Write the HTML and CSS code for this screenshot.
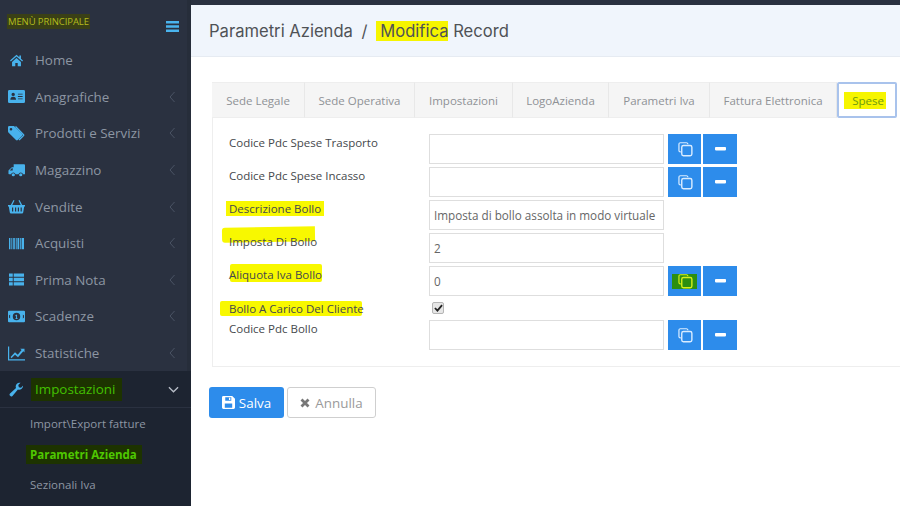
FILE: index.html
```html
<!DOCTYPE html>
<html lang="it">
<head>
<meta charset="utf-8">
<title>Parametri Azienda</title>
<link rel="stylesheet" href="styles.css">
</head>
<body>
<svg class="defs" width="0" height="0">
  <symbol id="chev" viewBox="0 0 6 12"><path d="M5.5 1 1 6l4.500 5" fill="none" stroke="currentColor" stroke-width="1"/></symbol>
  <symbol id="copy" viewBox="0 0 16 16"><path d="M10.500 2.500V2A1.500 1.500 0 0 0 9 .8H2.500A1.500 1.500 0 0 0 1 2.300V9a1.500 1.500 0 0 0 1.500 1.500H3" fill="none" stroke="currentColor" stroke-width="1.300"/><rect x="4" y="3.700" width="10.800" height="11" rx="1.800" fill="none" stroke="currentColor" stroke-width="1.500"/></symbol>
  <symbol id="minus" viewBox="0 0 11 4"><rect width="11" height="3.400" rx=".8" fill="currentColor"/></symbol>
</svg>
<aside class="sidebar">
  <div class="side-head">
    <span class="side-title">MENÙ PRINCIPALE</span>
    <svg class="burger" viewBox="0 0 13 11"><path d="M0 0h13v2.400H0zM0 4.300h13v2.400H0zM0 8.600h13V11H0z" fill="currentColor"/></svg>
  </div>
  <nav class="nav">
    <a class="item"><svg class="ico" viewBox="-2.460 -2.200 20.900 18.500"><path d="M8 0 0 7l1 1.200L8 2.200l7 6L16 7l-2.500-2.200V1h-2v2.100zM2.500 8.800V14h4v-4h3v4h4V8.800L8 4z" fill="currentColor"/></svg><span class="lbl">Home</span></a>
    <a class="item"><svg class="ico" viewBox="0 0 18 14"><path fill-rule="evenodd" d="M1.500 0h15A1.500 1.500 0 0 1 18 1.500v11a1.500 1.500 0 0 1-1.500 1.500h-15A1.500 1.500 0 0 1 0 12.500v-11A1.500 1.500 0 0 1 1.500 0zM5.500 3a1.800 1.800 0 1 0 0 3.600 1.800 1.800 0 0 0 0-3.600zM2.500 10.500h6c0-2.200-1-3.300-3-3.300s-3 1.100-3 3.300zM10.500 4v1h5V4zm0 2.500v1h5v-1zm0 2.500v1h5V9z" fill="currentColor"/></svg><span class="lbl">Anagrafiche</span><svg class="chev"><use href="#chev"/></svg></a>
    <a class="item"><svg class="ico" viewBox="0 0 17 15"><path fill-rule="evenodd" d="M0 1.200A1.200 1.200 0 0 1 1.200 0H6l8 8a1.300 1.300 0 0 1 0 1.800L9.800 14a1.300 1.300 0 0 1-1.800 0L.4 6.500 0 5.500zM3 2a1.300 1.300 0 1 0 0 2.600A1.300 1.300 0 0 0 3 2z" fill="currentColor"/><path d="m8 0 8 8.200c.6.600.6 1.200 0 1.800l-4.500 4.600-1-1L15 9.200 7 1z" fill="currentColor"/></svg><span class="lbl">Prodotti e Servizi</span><svg class="chev"><use href="#chev"/></svg></a>
    <a class="item"><svg class="ico" viewBox="0 0 18 13"><path fill-rule="evenodd" d="M6 0h11a1 1 0 0 1 1 1v9.500h-2.100a2.500 2.500 0 0 0-4.800 0H8a2.500 2.500 0 0 0-4.800 0H1a1 1 0 0 1-.5-.5V6.500L4 3h2zM1.800 6.600H5V4.200H4z" fill="currentColor"/><circle cx="5.600" cy="11" r="1.700" fill="currentColor"/><circle cx="13.500" cy="11" r="1.700" fill="currentColor"/></svg><span class="lbl">Magazzino</span><svg class="chev"><use href="#chev"/></svg></a>
    <a class="item"><svg class="ico" viewBox="0 0 17 14"><path fill-rule="evenodd" d="M0 5.500h2.800L5.500.5l1 .6L4.300 5.500h8.400L10.500 1.100l1-.6 2.700 5H17V7h-.8l-1 6a1.200 1.200 0 0 1-1.200 1H3a1.200 1.200 0 0 1-1.200-1l-1-6H0zM4 8v4h1.200V8zm3 0v4h1.200V8zm2.800 0v4H11V8zm2.800 0v4h1.200V8z" fill="currentColor"/></svg><span class="lbl">Vendite</span><svg class="chev"><use href="#chev"/></svg></a>
    <a class="item"><svg class="ico" viewBox="-1.050 -2 18.100 16"><path d="M0 0h1.500v12H0zM2.500 0h1v12h-1zM4.500 0h1.700v12H4.500zM7.200 0h1v12h-1zM9 0h1.800v12H9zM11.600 0h1v12h-1zM13.400 0H16v12h-2.600z" fill="currentColor"/></svg><span class="lbl">Acquisti</span><svg class="chev"><use href="#chev"/></svg></a>
    <a class="item"><svg class="ico" viewBox="-1.050 -1.500 18.100 16"><path d="M0 0h4v3.600H0zM5 0h11v3.600H5zM0 4.700h4v3.600H0zM5 4.700h11v3.600H5zM0 9.400h4V13H0zM5 9.400h11V13H5z" fill="currentColor"/></svg><span class="lbl">Prima Nota</span><svg class="chev"><use href="#chev"/></svg></a>
    <a class="item"><svg class="ico" viewBox="0 0 16 11"><path fill-rule="evenodd" d="M1 0h14a1 1 0 0 1 1 1v9a1 1 0 0 1-1 1H1a1 1 0 0 1-1-1V1a1 1 0 0 1 1-1zm7 2a3.500 3.500 0 1 0 0 7 3.500 3.500 0 0 0 0-7zM2 3.500a1.500 1.500 0 0 1-1 .8v2.400a1.500 1.500 0 0 1 1 .8zm12 0v4a1.500 1.500 0 0 1 1-.8V4.300a1.500 1.500 0 0 1-1-.8zM7.500 3.800h1v3.400h.6v.7H7v-.7h.6v-2.200l-.5.3-.3-.5z" fill="currentColor"/></svg><span class="lbl">Scadenze</span><svg class="chev"><use href="#chev"/></svg></a>
    <a class="item"><svg class="ico" viewBox="0 0 17 14"><path d="M0 0h1.200v12.800H17V14H0z" fill="currentColor"/><path d="M2.600 10.500 7 5.800l2.800 2.400 3.800-4.700-1.400-1.300H16.500V6l-1.200-1.200-5.300 6-3-2.500-3.600 3.500z" fill="currentColor"/></svg><span class="lbl">Statistiche</span><svg class="chev"><use href="#chev"/></svg></a>
    <a class="item active"><svg class="ico" viewBox="-.5 -.5 16 16"><path d="M14.500 3.500a4.200 4.200 0 0 1-5.500 4L3.200 14.300a1.700 1.700 0 0 1-2.500-.1 1.700 1.700 0 0 1-.1-2.400L7 6A4.200 4.200 0 0 1 11.800.3L9.400 2.700l.6 2.300 2.300.6 2-2.200z" fill="currentColor"/></svg><span class="lbl"><span class="mark-green">Impostazioni</span></span><svg class="chev-down" viewBox="0 0 12 7"><path d="m1 1 5 5 5-5" fill="none" stroke="currentColor" stroke-width="1.400"/></svg></a>
    <ul class="sub">
      <li class="sub-item">Import\Export fatture</li>
      <li class="sub-item sub-current"><span class="mark-green-sub">Parametri Azienda</span></li>
      <li class="sub-item">Sezionali Iva</li>
    </ul>
  </nav>
</aside>
<main class="main">
  <header class="page-head">
    <h1 class="page-title">Parametri Azienda <span class="sep">/</span> <span class="mark-title">Modifica</span> Record</h1>
  </header>
  <section class="content">
    <div class="tabs">
      <a class="tab tab-a">Sede Legale</a>
      <a class="tab tab-b">Sede Operativa</a>
      <a class="tab tab-c">Impostazioni</a>
      <a class="tab tab-d">LogoAzienda</a>
      <a class="tab tab-e">Parametri Iva</a>
      <a class="tab tab-f">Fattura Elettronica</a>
      <a class="tab tab-active"><span class="mark-tab">Spese</span></a>
    </div>
    <form class="panel">
      <div class="row">
        <label class="label">Codice Pdc Spese Trasporto</label>
        <input class="input" type="text">
        <button class="btn-sq btn-copy" type="button"><svg class="i-copy"><use href="#copy"/></svg></button>
        <button class="btn-sq btn-minus" type="button"><svg class="i-minus"><use href="#minus"/></svg></button>
      </div>
      <div class="row">
        <label class="label">Codice Pdc Spese Incasso</label>
        <input class="input" type="text">
        <button class="btn-sq btn-copy" type="button"><svg class="i-copy"><use href="#copy"/></svg></button>
        <button class="btn-sq btn-minus" type="button"><svg class="i-minus"><use href="#minus"/></svg></button>
      </div>
      <div class="row">
        <label class="label"><span class="hl hl-desc"></span><span class="ltxt">Descrizione Bollo</span></label>
        <input class="input" type="text" value="Imposta di bollo assolta in modo virtuale">
      </div>
      <div class="row">
        <label class="label"><span class="hl hl-imp"></span><span class="ltxt">Imposta Di Bollo</span></label>
        <input class="input" type="text" value="2">
      </div>
      <div class="row">
        <label class="label"><span class="hl hl-ali"></span><span class="ltxt">Aliquota Iva Bollo</span></label>
        <input class="input" type="text" value="0">
        <button class="btn-sq btn-copy btn-marked" type="button"><span class="mark-btn"><svg class="i-copy"><use href="#copy"/></svg></span></button>
        <button class="btn-sq btn-minus" type="button"><svg class="i-minus"><use href="#minus"/></svg></button>
      </div>
      <div class="row row-check">
        <label class="label"><span class="hl hl-car"></span><span class="ltxt">Bollo A Carico Del Cliente</span></label>
        <span class="check"><svg viewBox="0 0 10 9"><path d="M1 4.500 3.800 7.500 9 1.200" fill="none" stroke="#222" stroke-width="2"/></svg></span>
      </div>
      <div class="row">
        <label class="label">Codice Pdc Bollo</label>
        <input class="input" type="text">
        <button class="btn-sq btn-copy" type="button"><svg class="i-copy"><use href="#copy"/></svg></button>
        <button class="btn-sq btn-minus" type="button"><svg class="i-minus"><use href="#minus"/></svg></button>
      </div>
    </form>
    <div class="actions">
      <button class="btn btn-save" type="button"><svg class="btn-ico" viewBox="0 0 14 14"><path fill-rule="evenodd" d="M1.500 0H11l3 3v9.500a1.500 1.500 0 0 1-1.500 1.500h-11A1.500 1.500 0 0 1 0 12.500v-11A1.500 1.500 0 0 1 1.500 0zM3.500 1.300v3.700h6.500V1.300zM7.500 1.800h1.500v2.600H7.500zM3 8v4.700h8V8z" fill="currentColor"/></svg>Salva</button>
      <button class="btn btn-cancel" type="button"><svg class="btn-ico-x" viewBox="0 0 10 10"><path d="M1.500 1.500l7 7m0-7-7 7" stroke="currentColor" stroke-width="2.800" fill="none"/></svg>Annulla</button>
    </div>
  </section>
</main>
</body>
</html>
```

FILE: styles.css
```css
* { box-sizing: border-box; }
html, body { margin: 0; height: 100%; }
body {
  display: flex;
  width: 900px;
  height: 506px;
  overflow: hidden;
  font-family: "Open Sans", "Liberation Sans", sans-serif;
  background: #fff;
}
.defs { position: absolute; }

/* sidebar */
.sidebar {
  width: 191px;
  flex: none;
  display: flex;
  flex-direction: column;
  background: #2a3140;
  border-right: 4px solid #262d3a;
  color: #8d96a3;
}
.side-head {
  height: 42px;
  flex: none;
  position: relative;
  width: 187px;
}
.side-title {
  position: absolute;
  left: 7px;
  top: 14px;
  height: 15px;
  padding: 0 1px;
  line-height: 15px;
  font-size: 9.500px;
  letter-spacing: -.1px;
  color: #b3bc1c;
  background: #3a4016;
  white-space: nowrap;
}
.burger {
  position: absolute;
  left: 166px;
  top: 21px;
  width: 13px;
  height: 11px;
  color: #4ab4ee;
}
.nav { display: flex; flex-direction: column; width: 191px; flex: 1; }
.item {
  height: 36.600px;
  flex: none;
  display: flex;
  align-items: center;
  padding-left: 8px;
  font-size: 13.400px;
  color: #8d96a3;
}
.ico {
  width: 17px;
  height: 15px;
  flex: none;
  color: #48b2ec;
}
.lbl { margin-left: 10px; flex: 1; }
.chev {
  width: 6px;
  height: 12px;
  flex: none;
  margin-right: 16px;
  color: #4b5464;
}
.active {
  background: #1d2431;
  border-bottom: 1px solid #2a3140;
  height: 37px;
  width: 191px;
}
.mark-green {
  color: #43c000;
  background: #1d3300;
  padding: 2px 7px 3px 4px;
  margin-left: -4px;
}
.chev-down {
  width: 11px;
  height: 7px;
  flex: none;
  margin-right: 12px;
  color: #b8bec8;
}
.sub {
  list-style: none;
  margin: 0;
  padding: 1px 0 0;
  flex: 1;
  background: #1d2431;
}
.sub-item {
  height: 30.500px;
  line-height: 30.500px;
  padding-left: 30px;
  font-size: 11.500px;
  color: #8d96a3;
}
.mark-green-sub {
  color: #4fc800;
  font-weight: 700;
  background: #1d3300;
  padding: 2px 5px 2px 4px;
  margin-left: -4px;
}

/* main */
.main {
  flex: 1;
  border-top: 5px solid #2a3140;
  min-width: 0;
}
.page-head {
  height: 52px;
  background: #f0f5fc;
  border-bottom: 1px solid #e6ebf2;
  display: flex;
  align-items: center;
  padding-left: 18px;
}
.page-title {
  margin: 0;
  font-family: Inter, "Liberation Sans", sans-serif;
  font-size: 16.600px;
  font-weight: 400;
  color: #4f5256;
  white-space: nowrap;
}
.sep { margin: 0 4px; }
.mark-title { background: #f6f500; padding: 0 0 0 4px; }
.content { padding: 25px 0 0 18px; }

/* tabs */
.tabs {
  display: flex;
  margin-left: 3px;
  height: 36px;
  align-items: stretch;
}
.tab {
  display: flex;
  align-items: center;
  justify-content: center;
  flex: none;
  font-size: 11.500px;
  color: #8f9296;
  background: #f5f5f5;
  border-right: 1px solid #e8e8e8;
  border-top: 1px solid #eee;
  border-bottom: 1px solid #eee;
}
.tab-a { width: 93px; }
.tab-b { width: 110px; }
.tab-c { width: 98px; }
.tab-d { width: 96px; }
.tab-e { width: 101px; }
.tab-f { width: 127px; }
.tab-active {
  width: 60px;
  background: #fff;
  border: 2px solid #a9c3ec;
  border-radius: 2px;
  color: #6f9a10;
}
.mark-tab { background: #f6f500; padding: 1px 2px 1px 8px; margin-left: -4px; }

/* form */
.panel {
  margin-left: 3px;
  border-left: 1px solid #eee;
  border-bottom: 1px solid #eee;
  padding: 16px 0 16px 16px;
  display: flex;
  flex-direction: column;
  gap: 3px;
}
.row { display: flex; height: 30px; align-items: flex-start; }
.row-check { height: 18px; align-items: center; }
.label {
  width: 200px;
  flex: none;
  position: relative;
  padding-top: 1px;
  font-size: 11.500px;
  line-height: 16px;
  color: #45484c;
  white-space: nowrap;
}
.ltxt { position: relative; }
.hl { position: absolute; background: #f8f800; }
.hl-desc { left: -3px; top: 1px; width: 98px; height: 15px; }
.hl-imp { left: -7px; top: -6px; width: 93px; height: 15px; border-radius: 3px 0 0 3px; transform: rotate(-1deg); }
.hl-ali { left: 1px; top: -2px; width: 92px; height: 18px; border-radius: 2px; }
.hl-car { left: -9px; top: 1px; width: 142px; height: 15px; border-radius: 2px; }
.input {
  width: 235px;
  height: 30px;
  flex: none;
  border: 1px solid #dedede;
  padding: 0 4px;
  font-family: inherit;
  font-size: 11.700px;
  color: #666;
  background: #fff;
  border-radius: 0;
}
.btn-sq {
  height: 30px;
  flex: none;
  border: 0;
  padding: 0;
  color: #d9ecff;
  background: #2d8ceb;
  display: flex;
  align-items: center;
  justify-content: center;
}
.btn-copy { width: 33px; margin-left: 4px; }
.btn-minus { width: 34px; margin-left: 2px; color: #fff; }
.i-copy { width: 15px; height: 15px; display: block; margin-left: 1px; }
.i-minus { width: 11px; height: 4px; display: block; }
.mark-btn {
  width: 25px;
  height: 15px;
  background: #2c8f10;
  display: flex;
  align-items: center;
  justify-content: center;
  color: #d5ee18;
}
.check {
  width: 12px;
  height: 12px;
  margin-left: 3px;
  margin-top: -1px;
  border: 1px solid #b5b5b5;
  border-radius: 2px;
  background: #e6e6e6;
  display: flex;
  align-items: center;
  justify-content: center;
}
.check svg { width: 9px; height: 8px; display: block; }

/* actions */
.actions { display: flex; gap: 3px; margin-top: 20px; }
.btn {
  height: 31px;
  display: flex;
  align-items: center;
  justify-content: center;
  font-family: inherit;
  font-size: 13.400px;
  border-radius: 3px;
  padding: 0;
}
.btn-save {
  width: 75px;
  border: 0;
  background: #2d8ceb;
  color: #fff;
  font-weight: 500;
}
.btn-cancel {
  width: 89px;
  background: #fff;
  border: 1px solid #cfcfcf;
  color: #9a9a9a;
}
.btn-ico { width: 13px; height: 13px; margin-right: 4px; }
.btn-ico-x { width: 10px; height: 10px; margin-right: 5px; color: #777; }
```
